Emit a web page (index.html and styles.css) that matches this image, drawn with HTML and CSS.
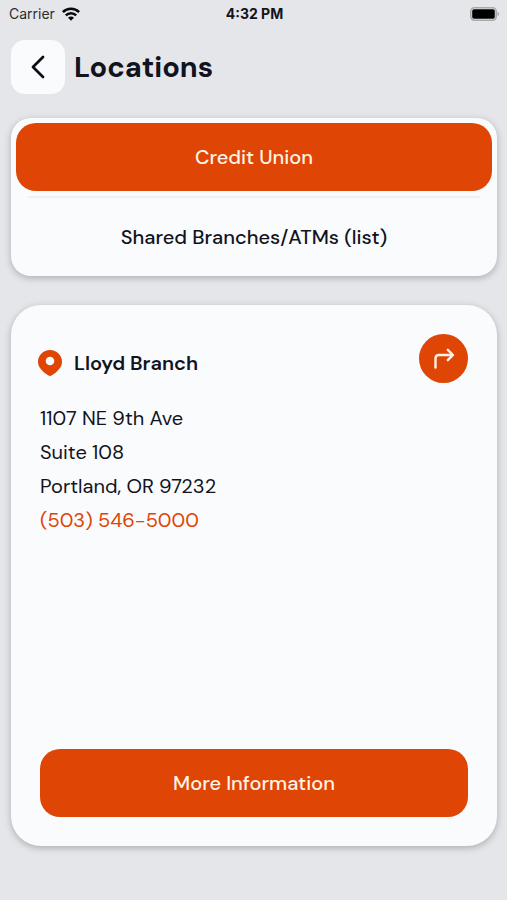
FILE: index.html
```html
<!DOCTYPE html>
<html lang="en">
<head>
<meta charset="utf-8">
<meta name="viewport" content="width=device-width, initial-scale=1">
<title>Locations</title>
<link rel="stylesheet" href="styles.css">
</head>
<body>
<div class="screen">
  <div class="status">
    <div class="carrier">
      <span>Carrier</span>
      <svg width="18" height="14" viewBox="0 0 18 14" fill="none" stroke="#08090c" stroke-width="2.5" aria-hidden="true">
        <path d="M.9 5.2C5.3.7 12.7.7 17.1 5.2"/>
        <path d="M3.8 8.3c2.9-2.9 7.5-2.9 10.4 0"/>
        <path d="M6 10.8c1.7-1.7 4.3-1.7 6 0L9 13.8z" fill="#08090c" stroke="none"/>
      </svg>
    </div>
    <span class="time">4:32 PM</span>
    <svg class="battery" width="30" height="14" viewBox="0 0 30 14" aria-hidden="true">
      <rect x=".8" y=".8" width="25.4" height="12.4" rx="3.6" fill="none" stroke="#a8a9ad" stroke-width="1.6"/>
      <rect x="2.2" y="2.2" width="22.6" height="9.6" rx="1.8" fill="#000"/>
      <path d="M27.5 4.8c2.2.8 2.2 3.6 0 4.4z" fill="#a8a9ad"/>
    </svg>
  </div>

  <header class="header">
    <button class="back" type="button" aria-label="Back">
      <svg width="54" height="54" viewBox="0 0 54 54" fill="none" stroke="#0b0e16" stroke-width="2.8" stroke-linecap="round" stroke-linejoin="round" aria-hidden="true"><path d="M32 17 22 27 32 37"/></svg>
    </button>
    <h1 class="title">Locations</h1>
  </header>

  <main class="main">
    <nav class="card tabs" aria-label="Location type">
      <button class="button button-primary" type="button">Credit Union</button>
      <div class="divider"></div>
      <button class="button button-plain" type="button">Shared Branches/ATMs (list)</button>
    </nav>

    <section class="card branch">
      <div class="branch-head">
        <svg class="pin" width="24" height="26" viewBox="0 0 24 26" aria-hidden="true">
          <path fill="#df4504" fill-rule="evenodd" d="M12 0C5.3 0 0 5.2 0 11.7c0 4.6 2.9 7.9 6.4 11l3.7 2.600c1.200.8 2.600.8 3.800 0l3.700-2.600c3.500-3.100 6.400-6.400 6.400-11C24 5.200 18.700 0 12 0zm0 6.700a4.300 4.300 0 1 1 0 8.600 4.300 4.300 0 0 1 0-8.600z"/>
        </svg>
        <h2 class="branch-name">Lloyd Branch</h2>
        <button class="directions" type="button" aria-label="Directions">
          <svg width="49" height="49" viewBox="0 0 49 49" fill="none" stroke="#fff3e6" stroke-width="2.4" stroke-linecap="round" stroke-linejoin="round" aria-hidden="true"><path d="M16.5 33.5V24.5Q16.5 21 20 21H33.5M28.8 15.8 34 21 28.8 26.2"/></svg>
        </button>
      </div>
      <address class="address">
        <span>1107 NE 9th Ave</span>
        <span>Suite 108</span>
        <span>Portland, OR 97232</span>
        <a class="phone" href="tel:5035465000">(503) 546-5000</a>
      </address>
      <button class="button button-primary more" type="button">More Information</button>
    </section>
  </main>
</div>
</body>
</html>
```
FILE: styles.css
```css
* {
  box-sizing: border-box;
}

body {
  margin: 0;
  background: #e5e6ea;
  color: #11141d;
  font-family: "DM Sans", Inter, "Liberation Sans", sans-serif;
}

button {
  padding: 0;
  border: 0;
  font: inherit;
  color: inherit;
  cursor: pointer;
}

.screen {
  display: flex;
  flex-direction: column;
  min-height: 100vh;
  padding: 0 10px 54px 11px;
}

.status {
  display: grid;
  grid-template-columns: 1fr auto 1fr;
  align-items: center;
  height: 27px;
  margin: 0 -3px 0 -2px;
  font-family: Inter, sans-serif;
  font-size: 14px;
}

.carrier {
  display: flex;
  align-items: center;
  gap: 7px;
  color: #2b2c30;
}

.time {
  font-weight: 700;
}

.battery {
  justify-self: end;
}

.header {
  display: flex;
  align-items: center;
  gap: 9px;
  margin-top: 13px;
}

.back {
  width: 54px;
  height: 54px;
  border-radius: 14px;
  background: #fafbfd;
}

.back svg,
.directions svg {
  display: block;
}

.title {
  margin: 0;
  font-size: 29px;
  font-weight: 700;
}

.main {
  display: flex;
  flex: 1;
  flex-direction: column;
  gap: 29px;
  margin-top: 24px;
}

.card {
  background: #fafbfd;
  box-shadow: 0 2px 7px rgba(0, 0, 0, 0.25);
}

.tabs {
  display: flex;
  flex-direction: column;
  padding: 5px;
  border-radius: 20px;
}

.button {
  height: 68px;
  border-radius: 20px;
  font-size: 20px;
  font-weight: 500;
}

.button-primary {
  background: #df4504;
  color: #fff3e6;
}

.button-plain {
  background: transparent;
}

.divider {
  height: 2px;
  margin: 5px 12px;
  background: #eff0f3;
}

.branch {
  display: flex;
  flex: 1;
  flex-direction: column;
  padding: 29px;
  border-radius: 30px;
}

.branch-head {
  display: flex;
  align-items: center;
  gap: 12px;
}

.pin {
  margin: 8px 0 0 -2px;
}

.branch-name {
  margin: 8px 0 0;
  font-size: 20px;
  font-weight: 600;
}

.directions {
  width: 49px;
  height: 49px;
  margin-left: auto;
  border-radius: 50%;
  background: #df4504;
}

.address {
  display: flex;
  flex-direction: column;
  align-items: flex-start;
  margin-top: 18px;
  font-size: 20px;
  font-style: normal;
  line-height: 34px;
}

.phone {
  color: #df4504;
  text-decoration: none;
}

.more {
  margin-top: auto;
}
```
